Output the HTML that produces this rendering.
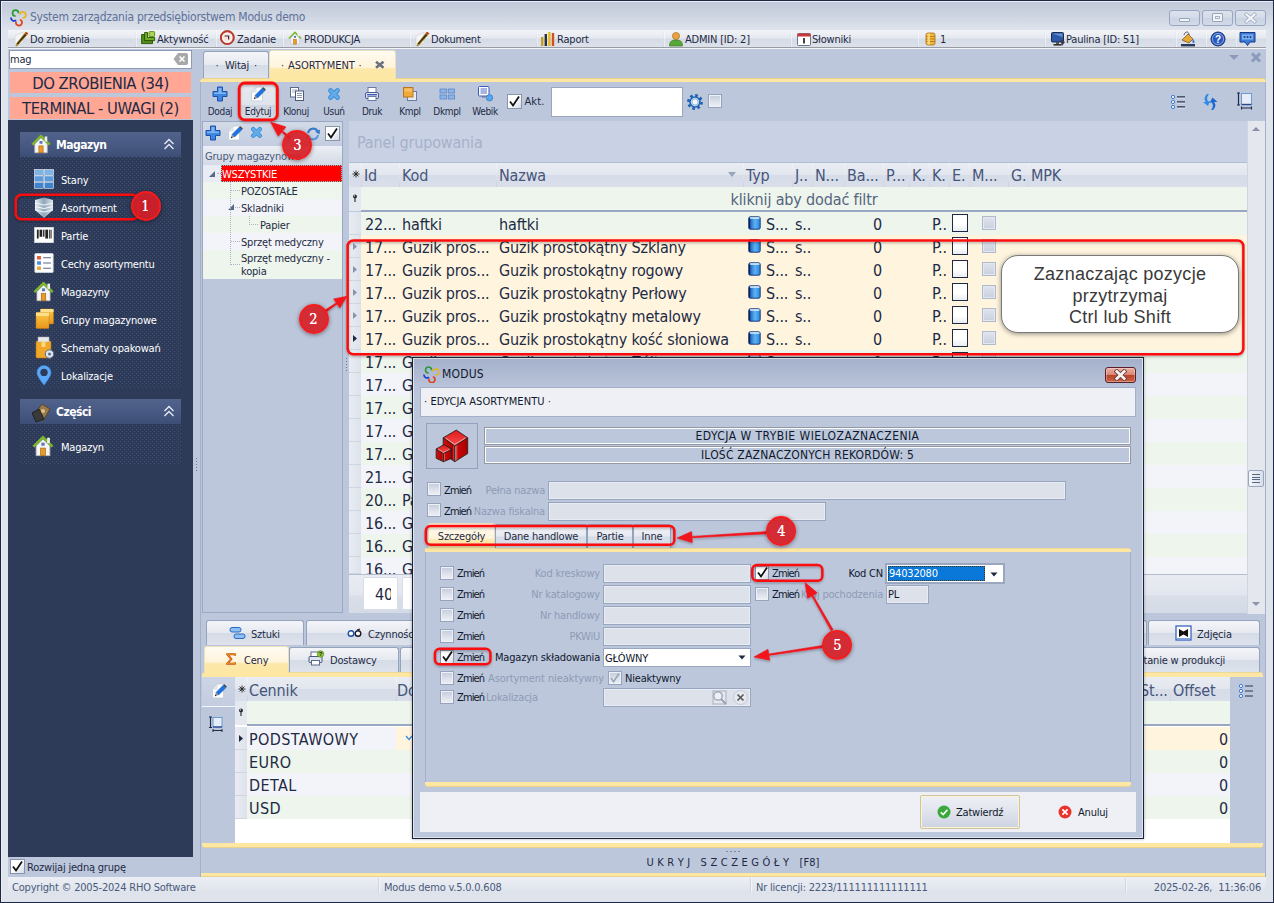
<!DOCTYPE html>
<html lang="pl">
<head>
<meta charset="utf-8">
<title>System zarządzania przedsiębiorstwem Modus demo</title>
<style>
*{box-sizing:border-box;margin:0;padding:0}
html,body{width:1274px;height:903px;overflow:hidden}
body{font-family:"DejaVu Sans Condensed","Liberation Sans",sans-serif;font-size:11px;letter-spacing:-0.2px;color:#1e2a44;background:#bcc7dc;position:relative}
.a{position:absolute}
.t{position:absolute;white-space:nowrap;line-height:14px}
.g{font-size:16px;line-height:22px;letter-spacing:-0.15px;color:#1e2a44}
.gh{font-size:16px;line-height:20px;letter-spacing:-0.15px;color:#46557a}
.w{color:#fff}
.gr{color:#8e9bb5}
.cb{background:linear-gradient(#c3cbdb,#dfe3ec 60%,#eef0f5);border:1px solid #97a3bc;box-shadow:inset 0 0 0 1px #eef1f6}
.cbw{background:linear-gradient(135deg,#fff 45%,#d3d9e4);border:1px solid #8a94ac}
.inp{background:#dde1ea;border:1px solid #98a6bf;box-shadow:inset 0 0 0 1px #e9ecf2}
.tab{border:1px solid #95a3bd;border-bottom:none;border-radius:3px 3px 0 0;background:linear-gradient(#f4f5f9,#e6e9f0 48%,#d6dce7 52%,#dde2eb)}
.tabA{border:1px solid #eadfbe;border-bottom:none;border-radius:3px 3px 0 0;background:linear-gradient(#fffbf2 0,#fff4da 58%,#fde8aa 64%,#fde7a3 100%)}
.red{border:3px solid #fc0c10;border-radius:7px;box-shadow:0 0 1.5px rgba(255,0,0,.55)}
.num{border-radius:50%;background:rgba(214,30,38,.92);border:2px solid #f41c1c;box-shadow:0 1px 4px rgba(40,0,0,.5);color:#fff;font-family:"DejaVu Serif Condensed","DejaVu Serif","Liberation Serif",serif;font-weight:normal;text-align:center;letter-spacing:0;text-shadow:0 0 .4px #fff}

.zm{letter-spacing:-0.85px}
.cbg{background:linear-gradient(#dfe3ec,#c9d0de);border:1px solid #b0bace;box-shadow:inset 0 0 0 1px #e4e7ef}

</style>
</head>
<body>
<div class="a " style="left:0px;top:0px;width:1274px;height:903px;background:#1c2844"></div>
<div class="a " style="left:1px;top:1px;width:1272px;height:901px;background:linear-gradient(#c0c9da 0,#cdd4e1 14px,#dfe3ec 29px,#dfe3ec 100%)"></div>
<div class="a " style="left:1px;top:1px;width:1272px;height:1px;background:#e9ecf2"></div>
<div class="a " style="left:1px;top:1px;width:1px;height:901px;background:#e9ecf2"></div>
<div class="a " style="left:8px;top:48px;width:1258px;height:829px;background:#bcc7dc"></div>
<div class="t " style="left:30px;top:10px;font-size:12px;color:#5d7199;letter-spacing:-0.25px;line-height:15px">System zarządzania przedsiębiorstwem Modus demo</div>
<svg class="a" style="left:9px;top:9px" width="18" height="18" viewBox="0 0 18 18"><g fill="none" stroke-width="1.7" stroke-linecap="round"><path d="M6 7 A3 3 0 1 1 9.5 3.5" stroke="#2a9a32"/><path d="M11 5 A3 3 0 1 1 14 9" stroke="#e8b418"/><path d="M11.5 11 A3 3 0 1 1 7 13" stroke="#e2401a"/><path d="M6.5 11.5 A3 3 0 0 1 2 9" stroke="#1c3fd0"/></g></svg>
<div class="a " style="left:1169px;top:10px;width:31px;height:16px;border:1px solid #98a6c4;border-radius:3px;background:linear-gradient(#dde3ec,#d3dbe7 50%,#c9d3e3 51%,#d3dbe8)"></div>
<div class="a " style="left:1202px;top:10px;width:31px;height:16px;border:1px solid #98a6c4;border-radius:3px;background:linear-gradient(#dde3ec,#d3dbe7 50%,#c9d3e3 51%,#d3dbe8)"></div>
<div class="a " style="left:1235px;top:10px;width:31px;height:16px;border:1px solid #98a6c4;border-radius:3px;background:linear-gradient(#dde3ec,#d3dbe7 50%,#c9d3e3 51%,#d3dbe8)"></div>
<div class="a " style="left:1179px;top:18px;width:11px;height:4px;border:1px solid #98a4bc;background:#f2f4f8;border-radius:1px"></div>
<div class="a " style="left:1212px;top:13px;width:11px;height:9px;border:1px solid #98a4bc;background:#f2f4f8;border-radius:1px;box-shadow:inset 0 0 0 2px #f2f4f8,inset 0 0 0 3px #a8b3c8"></div>
<svg class="a" style="left:1244px;top:12px" width="13" height="12" viewBox="0 0 13 12"><path d="M2.5 2.5 L10.5 9.5 M10.5 2.5 L2.5 9.5" stroke="#a3aec5" stroke-width="3.6" stroke-linecap="square"/><path d="M2.5 2.5 L10.5 9.5 M10.5 2.5 L2.5 9.5" stroke="#f6f7fa" stroke-width="2" stroke-linecap="square"/></svg>
<div class="a " style="left:8px;top:30px;width:1258px;height:18px;background:linear-gradient(#f2f4f7,#e6e9f0 45%,#d6dce7 55%,#dce1ea);border-bottom:1px solid #9a9ca3"></div>
<div class="a " style="left:8px;top:48px;width:1258px;height:1px;background:#f4f5f8"></div>
<div class="a " style="left:135px;top:31px;width:1px;height:16px;background:linear-gradient(#eceef3,#cdd4e1)"></div>
<div class="a " style="left:136px;top:31px;width:1px;height:16px;background:rgba(255,255,255,.45)"></div>
<div class="a " style="left:215px;top:31px;width:1px;height:16px;background:linear-gradient(#eceef3,#cdd4e1)"></div>
<div class="a " style="left:216px;top:31px;width:1px;height:16px;background:rgba(255,255,255,.45)"></div>
<div class="a " style="left:282px;top:31px;width:1px;height:16px;background:linear-gradient(#eceef3,#cdd4e1)"></div>
<div class="a " style="left:283px;top:31px;width:1px;height:16px;background:rgba(255,255,255,.45)"></div>
<div class="a " style="left:409px;top:31px;width:1px;height:16px;background:linear-gradient(#eceef3,#cdd4e1)"></div>
<div class="a " style="left:410px;top:31px;width:1px;height:16px;background:rgba(255,255,255,.45)"></div>
<div class="a " style="left:536px;top:31px;width:1px;height:16px;background:linear-gradient(#eceef3,#cdd4e1)"></div>
<div class="a " style="left:537px;top:31px;width:1px;height:16px;background:rgba(255,255,255,.45)"></div>
<div class="a " style="left:663px;top:31px;width:1px;height:16px;background:linear-gradient(#eceef3,#cdd4e1)"></div>
<div class="a " style="left:664px;top:31px;width:1px;height:16px;background:rgba(255,255,255,.45)"></div>
<div class="a " style="left:790px;top:31px;width:1px;height:16px;background:linear-gradient(#eceef3,#cdd4e1)"></div>
<div class="a " style="left:791px;top:31px;width:1px;height:16px;background:rgba(255,255,255,.45)"></div>
<div class="a " style="left:917px;top:31px;width:1px;height:16px;background:linear-gradient(#eceef3,#cdd4e1)"></div>
<div class="a " style="left:918px;top:31px;width:1px;height:16px;background:rgba(255,255,255,.45)"></div>
<div class="a " style="left:1044px;top:31px;width:1px;height:16px;background:linear-gradient(#eceef3,#cdd4e1)"></div>
<div class="a " style="left:1045px;top:31px;width:1px;height:16px;background:rgba(255,255,255,.45)"></div>
<div class="a " style="left:1175px;top:31px;width:1px;height:16px;background:linear-gradient(#eceef3,#cdd4e1)"></div>
<div class="a " style="left:1176px;top:31px;width:1px;height:16px;background:rgba(255,255,255,.45)"></div>
<div class="a " style="left:1205px;top:31px;width:1px;height:16px;background:linear-gradient(#eceef3,#cdd4e1)"></div>
<div class="a " style="left:1206px;top:31px;width:1px;height:16px;background:rgba(255,255,255,.45)"></div>
<div class="a " style="left:1235px;top:31px;width:1px;height:16px;background:linear-gradient(#eceef3,#cdd4e1)"></div>
<div class="a " style="left:1236px;top:31px;width:1px;height:16px;background:rgba(255,255,255,.45)"></div>
<div class="t " style="left:30px;top:33px;">Do zrobienia</div>
<div class="t " style="left:157px;top:33px;">Aktywność</div>
<div class="t " style="left:237px;top:33px;">Zadanie</div>
<div class="t " style="left:304px;top:33px;">PRODUKCJA</div>
<div class="t " style="left:431px;top:33px;">Dokument</div>
<div class="t " style="left:557px;top:33px;">Raport</div>
<div class="t " style="left:685px;top:33px;">ADMIN [ID: 2]</div>
<div class="t " style="left:812px;top:33px;">Słowniki</div>
<div class="t " style="left:940px;top:33px;">1</div>
<div class="t " style="left:1066px;top:33px;">Paulina [ID: 51]</div>
<svg class="a" style="left:14px;top:31px" width="16" height="16" viewBox="0 0 16 16"><path d="M1 15 L1 5 L9 1 L9 12 Z" fill="#f4f4f4" stroke="#c8c8c8" stroke-width=".5"/><path d="M12 1 L14 2.5 L4 14 L2 15 L2.6 12.6 Z" fill="#e8b820" stroke="#7a5a10" stroke-width=".6"/><path d="M12 1 L14 2.5 L13 3.6 L11 2.2Z" fill="#d02020"/><path d="M11 2.8 L12.4 3.9 L3.8 13.6 L2.8 12.6Z" fill="#3a3010"/></svg>
<svg class="a" style="left:415px;top:31px" width="16" height="16" viewBox="0 0 16 16"><path d="M1 15 L1 5 L9 1 L9 12 Z" fill="#f4f4f4" stroke="#c8c8c8" stroke-width=".5"/><path d="M12 1 L14 2.5 L4 14 L2 15 L2.6 12.6 Z" fill="#e8b820" stroke="#7a5a10" stroke-width=".6"/><path d="M12 1 L14 2.5 L13 3.6 L11 2.2Z" fill="#d02020"/><path d="M11 2.8 L12.4 3.9 L3.8 13.6 L2.8 12.6Z" fill="#3a3010"/></svg>
<svg class="a" style="left:141px;top:31px" width="15" height="14" viewBox="0 0 15 14"><path d="M0.6 3.5 H3.5 V9.5 H11.5 V12.6 H0.6Z" fill="#4f8f14" stroke="#2a4f06" stroke-width=".9"/><path d="M3.6 1.5 H6.5 V6.5 H13.6 V9.6 H3.6Z" fill="#6db024" stroke="#2a4f06" stroke-width=".9"/><rect x="8" y="0.6" width="5.6" height="5" rx=".8" fill="#a8d848" stroke="#4a7a10" stroke-width=".8"/></svg>
<svg class="a" style="left:220px;top:30px" width="15" height="15" viewBox="0 0 15 15"><circle cx="7.3" cy="7.6" r="6.3" fill="#fff" stroke="#cc3a2c" stroke-width="1.9"/><circle cx="7.3" cy="7.6" r="7.1" fill="none" stroke="#8a2a20" stroke-width=".5"/><circle cx="7.3" cy="7.6" r="4.2" fill="#f8e4e0"/><path d="M4.6 6 H8.6 V9.6" fill="none" stroke="#3a2a2a" stroke-width="1.2"/></svg>
<svg class="a" style="left:288px;top:31px" width="14" height="14" viewBox="0 0 16 16"><path d="M3 8 V15 H13 V8 L8 3Z" fill="#f6f6f6" stroke="#b8b8b8" stroke-width=".6"/><path d="M1 8.5 L8 1.5 L15 8.5" fill="none" stroke="#7cb82a" stroke-width="1.8" stroke-linejoin="round"/><rect x="6.3" y="9.5" width="3.4" height="5.5" fill="#e89a28" stroke="#a86410" stroke-width=".5"/><rect x="6.8" y="5.6" width="2.4" height="2.2" fill="#5a78b8"/><rect x="11" y="2" width="2" height="4" fill="#eee"/></svg>
<svg class="a" style="left:540px;top:31px" width="16" height="16" viewBox="0 0 16 16"><rect x="1" y="6" width="2.4" height="9" fill="#c8a020"/><rect x="4.6" y="3" width="2.4" height="12" fill="#303030"/><rect x="8.2" y="1" width="2.4" height="14" fill="#e8b820"/><rect x="11.8" y="2" width="2.4" height="13" fill="#d05020"/></svg>
<svg class="a" style="left:668px;top:31px" width="16" height="16" viewBox="0 0 16 16"><circle cx="8" cy="5" r="3.6" fill="#e8a040" stroke="#a86a18" stroke-width=".6"/><path d="M1.5 15 C1.5 10 4 9 8 9 C12 9 14.5 10 14.5 15Z" fill="#58a838" stroke="#2f6d18" stroke-width=".6"/></svg>
<svg class="a" style="left:796px;top:31px" width="16" height="16" viewBox="0 0 16 16"><rect x="1.5" y="2.5" width="13" height="12" rx="1" fill="#fff" stroke="#6a7690"/><rect x="1.5" y="2.5" width="13" height="3" fill="#c83a3a"/><rect x="7" y="7" width="2" height="5.5" fill="#444"/></svg>
<svg class="a" style="left:923px;top:31px" width="16" height="16" viewBox="0 0 16 16"><rect x="3" y="2" width="9" height="12" rx="2" fill="#f0b838" stroke="#a86a10" stroke-width=".8"/><path d="M3 5.5 H12 M3 8 H12 M3 10.5 H12" stroke="#a86a10" stroke-width=".7"/><rect x="4.5" y="2.5" width="2.5" height="11" fill="#fbe08a" opacity=".8"/></svg>
<svg class="a" style="left:1050px;top:31px" width="16" height="16" viewBox="0 0 16 16"><rect x="1.5" y="1.5" width="12" height="9.5" rx="1" fill="#2c5aa8" stroke="#1c2c50"/><path d="M2.5 2.5 H12.5 V6 Z" fill="#7aa8e8" opacity=".7"/><rect x="6" y="11" width="3" height="2" fill="#555"/><rect x="3.5" y="13" width="8" height="1.6" fill="#333"/><path d="M10 8 L15 11 L12 15Z" fill="#3a3a4a"/></svg>
<svg class="a" style="left:1180px;top:31px" width="16" height="16" viewBox="0 0 16 16"><path d="M2 9 L8 3 L13 8 L9 12 Z" fill="#e8a838" stroke="#6a4a10" stroke-width=".7"/><path d="M4 4 C5 0 9 0 9 4" fill="none" stroke="#555" stroke-width="1"/><rect x="1" y="13" width="14" height="2.4" fill="#2a3a5a"/><path d="M13 8 C15 10 15 12 13.5 12 C12 12 12 10 13 8" fill="#3a78d8"/></svg>
<svg class="a" style="left:1210px;top:31px" width="16" height="16" viewBox="0 0 16 16"><circle cx="8" cy="8" r="7" fill="#2a58c0" stroke="#14306a"/><circle cx="8" cy="8" r="5.6" fill="none" stroke="#9ab8f0" stroke-width=".8"/><text x="8" y="12" font-size="10" font-weight="bold" text-anchor="middle" fill="#fff" font-family="Liberation Sans, sans-serif">?</text></svg>
<svg class="a" style="left:1239px;top:31px" width="17" height="16" viewBox="0 0 17 16"><path d="M1 1.5 H16 V11 H11 L8.5 14.5 L6 11 H1Z" fill="#3a7ad8" stroke="#1a3a80"/><rect x="3" y="3.5" width="11" height="5" fill="#7ab0f0"/><circle cx="5.5" cy="6" r="1" fill="#1a3a80"/><circle cx="8.5" cy="6" r="1" fill="#1a3a80"/><circle cx="11.5" cy="6" r="1" fill="#1a3a80"/></svg>
<div class="a " style="left:8px;top:877px;width:1258px;height:17px;background:linear-gradient(#eceff4,#dde2eb)"></div>
<div class="a " style="left:378px;top:878px;width:1px;height:15px;background:#d0d6e2"></div>
<div class="a " style="left:379px;top:878px;width:1px;height:15px;background:#f2f4f8"></div>
<div class="a " style="left:750px;top:878px;width:1px;height:15px;background:#d0d6e2"></div>
<div class="a " style="left:751px;top:878px;width:1px;height:15px;background:#f2f4f8"></div>
<div class="a " style="left:1125px;top:878px;width:1px;height:15px;background:#d0d6e2"></div>
<div class="a " style="left:1126px;top:878px;width:1px;height:15px;background:#f2f4f8"></div>
<div class="t " style="left:12px;top:881px;color:#4a5a7c">Copyright © 2005-2024 RHO Software</div>
<div class="t " style="left:384px;top:881px;color:#4a5a7c">Modus demo v.5.0.0.608</div>
<div class="t " style="left:756px;top:881px;color:#4a5a7c">Nr licencji: 2223/111111111111111</div>
<div class="t " style="right:13px;top:881px;color:#4a5a7c">2025-02-26,&nbsp; 11:36:06</div>
<div class="a " style="left:9px;top:50px;width:183px;height:19px;background:#fff;border:1px solid #8c9ab5"></div>
<div class="t " style="left:10px;top:53px;">mag</div>
<svg class="a" style="left:173px;top:52px" width="16" height="14" viewBox="0 0 16 14"><path d="M5 1 H13 A2 2 0 0 1 15 3 V11 A2 2 0 0 1 13 13 H5 L0.5 7Z" fill="#a8a8a8"/><path d="M6.5 4.5 L11.5 9.5 M11.5 4.5 L6.5 9.5" stroke="#fff" stroke-width="1.6"/></svg>
<div class="a " style="left:10px;top:72px;width:181px;height:21px;background:#ffa695;font-size:16.5px;line-height:24px;letter-spacing:-0.48px;text-align:center;line-height:24px">DO ZROBIENIA (34)</div>
<div class="a " style="left:10px;top:97px;width:181px;height:22px;background:#ffa695;font-size:16.5px;line-height:24px;letter-spacing:-0.48px;text-align:center">TERMINAL - UWAGI (2)</div>
<div class="a " style="left:8px;top:120px;width:185px;height:737px;background:#2d3a58"></div>
<svg class="a" style="left:20px;top:157px" width="161" height="307" viewBox="0 0 161 307"><defs><pattern id="dp" width="4" height="4" patternUnits="userSpaceOnUse"><rect x="0" y="0" width="1" height="1" fill="#3f4f74"/><rect x="2" y="2" width="1" height="1" fill="#3f4f74"/></pattern></defs><rect x="0" y="0" width="161" height="232" fill="url(#dp)"/><rect x="0" y="267" width="161" height="40" fill="url(#dp)"/></svg>
<div class="a " style="left:20px;top:132px;width:161px;height:25px;background:linear-gradient(#51638b,#485a83 50%,#3d4e76)"></div>
<div class="t " style="left:56px;top:138px;color:#fff;font-weight:bold;font-size:12px;letter-spacing:-0.5px;line-height:15px">Magazyn</div>
<svg class="a" style="left:163px;top:138px" width="12" height="13" viewBox="0 0 12 13"><path d="M1.5 6 L6 1.5 L10.5 6 M1.5 11 L6 6.5 L10.5 11" fill="none" stroke="#e8ecf4" stroke-width="1.3"/></svg>
<div class="a " style="left:20px;top:399px;width:161px;height:25px;background:linear-gradient(#51638b,#485a83 50%,#3d4e76)"></div>
<div class="t " style="left:56px;top:405px;color:#fff;font-weight:bold;font-size:12px;letter-spacing:-0.5px;line-height:15px">Części</div>
<svg class="a" style="left:163px;top:405px" width="12" height="13" viewBox="0 0 12 13"><path d="M1.5 6 L6 1.5 L10.5 6 M1.5 11 L6 6.5 L10.5 11" fill="none" stroke="#e8ecf4" stroke-width="1.3"/></svg>
<div class="t " style="left:61px;top:174px;color:#fff">Stany</div>
<div class="t " style="left:61px;top:202px;color:#fff">Asortyment</div>
<div class="t " style="left:61px;top:230px;color:#fff">Partie</div>
<div class="t " style="left:61px;top:258px;color:#fff">Cechy asortymentu</div>
<div class="t " style="left:61px;top:286px;color:#fff">Magazyny</div>
<div class="t " style="left:61px;top:314px;color:#fff">Grupy magazynowe</div>
<div class="t " style="left:61px;top:342px;color:#fff">Schematy opakowań</div>
<div class="t " style="left:61px;top:370px;color:#fff">Lokalizacje</div>
<div class="t " style="left:61px;top:441px;color:#fff">Magazyn</div>
<svg class="a" style="left:31px;top:134px" width="20" height="20" viewBox="0 0 16 16"><path d="M3 8 V15 H13 V8 L8 3Z" fill="#f6f6f6" stroke="#b8b8b8" stroke-width=".6"/><path d="M1 8.5 L8 1.5 L15 8.5" fill="none" stroke="#7cb82a" stroke-width="1.8" stroke-linejoin="round"/><rect x="6.3" y="9.5" width="3.4" height="5.5" fill="#e89a28" stroke="#a86410" stroke-width=".5"/><rect x="6.8" y="5.6" width="2.4" height="2.2" fill="#5a78b8"/><rect x="11" y="2" width="2" height="4" fill="#eee"/></svg>
<svg class="a" style="left:30px;top:401px" width="22" height="22" viewBox="0 0 22 22"><path d="M4 14 L12 3 L20 8 L13 20Z" fill="#9a7a4a" stroke="#4a3a20" stroke-width=".8"/><path d="M2 12 L9 8 L14 18 L6 21Z" fill="#3a3a3a" stroke="#222"/><circle cx="13" cy="10" r="2" fill="#d8c080"/></svg>
<svg class="a" style="left:34px;top:169px" width="20" height="20" viewBox="0 0 22 22"><g stroke="#fff" stroke-width=".6"><rect x=".5" y=".5" width="10" height="6.5" fill="#7eb4e6"/><rect x="11.5" y=".5" width="10" height="6.5" fill="#7eb4e6"/><rect x=".5" y="7.6" width="10" height="6.5" fill="#5c9cdc"/><rect x="11.5" y="7.6" width="10" height="6.5" fill="#5c9cdc"/><rect x=".5" y="14.7" width="10" height="6.5" fill="#3f84cf"/><rect x="11.5" y="14.7" width="10" height="6.5" fill="#3f84cf"/></g></svg>
<svg class="a" style="left:34px;top:197px" width="20" height="22" viewBox="0 0 20 22"><defs><linearGradient id="as1" x1="0" x2="1"><stop offset="0" stop-color="#e8eef4"/><stop offset=".5" stop-color="#8fa6bc"/><stop offset="1" stop-color="#dfe6ee"/></linearGradient></defs><path d="M1 3 L10 0.5 L19 3 V13 L10 21 L1 13Z" fill="url(#as1)"/><path d="M1 6 L10 8 L19 6 M1 9.5 L10 11.5 L19 9.5 M1 13 L10 15 L19 13" stroke="#f4f7fa" stroke-width="1" fill="none"/></svg>
<svg class="a" style="left:34px;top:227px" width="20" height="16" viewBox="0 0 22 18"><rect x=".5" y=".5" width="21" height="17" fill="#fff" stroke="#ddd"/><g fill="#222"><rect x="3" y="3" width="2" height="10"/><rect x="6" y="3" width="3" height="8"/><rect x="10" y="3" width="1.5" height="8"/><rect x="12.5" y="3" width="3" height="10"/><rect x="16.5" y="3" width="1" height="10"/><rect x="18.3" y="3" width="1.2" height="10"/></g></svg>
<svg class="a" style="left:34px;top:253px" width="20" height="20" viewBox="0 0 22 23"><rect x=".5" y=".5" width="21" height="22" rx="1" fill="#fff" stroke="#cfd6e2"/><rect x="3" y="3.5" width="4.5" height="4" fill="#e05a3a"/><rect x="3" y="9.5" width="4.5" height="4" fill="#4a90d8"/><rect x="3" y="15.5" width="4.5" height="4" fill="#e8a838"/><path d="M10 5.5 H19 M10 11.5 H19 M10 17.5 H19" stroke="#5a6a8a" stroke-width="1.2"/></svg>
<svg class="a" style="left:33px;top:281px" width="21" height="21" viewBox="0 0 16 16"><path d="M3 8 V15 H13 V8 L8 3Z" fill="#f6f6f6" stroke="#b8b8b8" stroke-width=".6"/><path d="M1 8.5 L8 1.5 L15 8.5" fill="none" stroke="#7cb82a" stroke-width="1.8" stroke-linejoin="round"/><rect x="6.3" y="9.5" width="3.4" height="5.5" fill="#e89a28" stroke="#a86410" stroke-width=".5"/><rect x="6.8" y="5.6" width="2.4" height="2.2" fill="#5a78b8"/><rect x="11" y="2" width="2" height="4" fill="#eee"/></svg>
<svg class="a" style="left:35px;top:308px" width="19" height="21" viewBox="0 0 19 21"><defs><linearGradient id="gb1" x1="0" y1="0" x2="0" y2="1"><stop offset="0" stop-color="#fbc84a"/><stop offset="1" stop-color="#e8961a"/></linearGradient></defs><rect x="5.5" y="1" width="13" height="15" rx="1" fill="url(#gb1)" stroke="#c07a10" stroke-width=".5"/><rect x="5.5" y="1" width="13" height="3" fill="#fde08a"/><rect x="1" y="4.5" width="13" height="16" rx="1" fill="url(#gb1)" stroke="#c07a10" stroke-width=".5"/><rect x="1" y="4.5" width="13" height="3.4" fill="#fde08a"/></svg>
<svg class="a" style="left:34px;top:336px" width="22" height="24" viewBox="0 0 22 24"><rect x="2" y="5" width="15" height="17" rx="1" fill="#f0a828" stroke="#b87410" stroke-width=".6"/><rect x="4" y="1" width="11" height="5" fill="#e8e8ec" stroke="#aaa" stroke-width=".5"/><rect x="7.5" y="5" width="4" height="6" fill="#fbd87a"/><circle cx="15.5" cy="18" r="4.2" fill="#dfe4ec" stroke="#5a6a8a"/><circle cx="15.5" cy="18" r="1.5" fill="#5a6a8a"/></svg>
<svg class="a" style="left:36px;top:365px" width="16" height="21" viewBox="0 0 18 24"><path d="M9 23 C3 15 1 12 1 8.5 A8 8 0 0 1 17 8.5 C17 12 15 15 9 23Z" fill="#5aa8f8" stroke="#3a80d8" stroke-width=".6"/><circle cx="9" cy="8.5" r="4.2" fill="#2d3a58"/></svg>
<svg class="a" style="left:32px;top:435px" width="22" height="22" viewBox="0 0 16 16"><path d="M3 8 V15 H13 V8 L8 3Z" fill="#f6f6f6" stroke="#b8b8b8" stroke-width=".6"/><path d="M1 8.5 L8 1.5 L15 8.5" fill="none" stroke="#7cb82a" stroke-width="1.8" stroke-linejoin="round"/><rect x="6.3" y="9.5" width="3.4" height="5.5" fill="#e89a28" stroke="#a86410" stroke-width=".5"/><rect x="6.8" y="5.6" width="2.4" height="2.2" fill="#5a78b8"/><rect x="11" y="2" width="2" height="4" fill="#eee"/></svg>
<div class="a cbw" style="left:10px;top:859px;width:15px;height:15px;"></div>
<svg class="a" style="left:11px;top:860px" width="13" height="13" viewBox="0 0 13 13"><path d="M2 6.5 L5 10.5 L11 1.5" fill="none" stroke="#111" stroke-width="1.8"/></svg>
<div class="t " style="left:27px;top:861px;">Rozwijaj jedną grupę</div>
<div class="a tab" style="left:203px;top:51px;width:66px;height:27px;"></div>
<div class="t " style="left:215.5px;top:59px;">·</div>
<div class="t " style="left:225px;top:59px;">Witaj</div>
<div class="t " style="left:254px;top:59px;">·</div>
<div class="a " style="left:200px;top:78px;width:1066px;height:4px;background:#fde7a3;border-top:1px solid #e8d28e;border-radius:4px 4px 0 0"></div>
<div class="a tabA" style="left:269px;top:50px;width:127px;height:29px;"></div>
<div class="t " style="left:281px;top:59px;">·</div>
<div class="t " style="left:288px;top:59px;letter-spacing:-0.05px">ASORTYMENT</div>
<div class="t " style="left:358.5px;top:59px;">·</div>
<svg class="a" style="left:374px;top:60px" width="11" height="10" viewBox="0 0 11 10"><path d="M2 1.8 L9.5 7.8 M9.5 1.8 L2 7.8" stroke="#6c7080" stroke-width="2.7"/></svg>
<div class="a " style="left:200px;top:82px;width:1px;height:795px;background:#a3b0ca"></div>
<div class="a " style="left:1265px;top:82px;width:1px;height:795px;background:#a3b0ca"></div>
<svg class="a" style="left:1228px;top:54px" width="12" height="8" viewBox="0 0 12 8"><path d="M1 1 H11 L6 6Z" fill="#8c9abb"/></svg>
<svg class="a" style="left:1250px;top:52px" width="12" height="12" viewBox="0 0 12 12"><path d="M2 1.5 L10 9.5 M10 1.5 L2 9.5" stroke="#8c9abb" stroke-width="3"/></svg>
<div class="a " style="left:240px;top:84px;width:36px;height:35px;background:linear-gradient(#e6e9f0,#dfe3eb 60%,#cfd5e1 62%,#d3d9e4);border:1px solid #d8d2b8;border-radius:4px"></div>
<div class="t " style="left:195px;top:105px;width:50px;text-align:center;font-size:10px;letter-spacing:-0.35px;color:#1e2a44">Dodaj</div>
<div class="t " style="left:233px;top:105px;width:50px;text-align:center;font-size:10px;letter-spacing:-0.35px;color:#1e2a44">Edytuj</div>
<div class="t " style="left:271px;top:105px;width:50px;text-align:center;font-size:10px;letter-spacing:-0.35px;color:#1e2a44">Klonuj</div>
<div class="t " style="left:309px;top:105px;width:50px;text-align:center;font-size:10px;letter-spacing:-0.35px;color:#1e2a44">Usuń</div>
<div class="t " style="left:347px;top:105px;width:50px;text-align:center;font-size:10px;letter-spacing:-0.35px;color:#1e2a44">Druk</div>
<div class="t " style="left:385px;top:105px;width:50px;text-align:center;font-size:10px;letter-spacing:-0.35px;color:#1e2a44">Kmpl</div>
<div class="t " style="left:422px;top:105px;width:50px;text-align:center;font-size:10px;letter-spacing:-0.35px;color:#1e2a44">Dkmpl</div>
<div class="t " style="left:460px;top:105px;width:50px;text-align:center;font-size:10px;letter-spacing:-0.35px;color:#1e2a44">Webik</div>
<svg class="a" style="left:212px;top:86px" width="16" height="16" viewBox="0 0 16 16"><path d="M5.5 1 H10.5 V5.5 H15 V10.5 H10.5 V15 H5.5 V10.5 H1 V5.5 H5.5Z" fill="#3f86e0" stroke="#1c4fa8" stroke-width="1"/><path d="M6.5 2 H9.5 V6.5 H14 V8 H2 V6.5 H6.5Z" fill="#8cc0f8" opacity=".8"/></svg>
<svg class="a" style="left:250px;top:86px" width="16" height="16" viewBox="0 0 16 16"><path d="M2.5 15 Q1.5 15 1.5 14 V6 L6.5 1 H11.5 Q12.5 1 12.5 2 V14 Q12.5 15 11.5 15Z" fill="#fff" stroke="#c3c9d6" stroke-width=".8"/><path d="M1.8 6 H6.2 V1.4Z" fill="#e9ecf1" stroke="#c3c9d6" stroke-width=".5"/><path d="M12.4 2 L15 4.6 L7.6 12 L5 9.4Z" fill="#1c74e0" stroke="#1450a8" stroke-width=".5"/><path d="M12.4 2 L13.4 1.2 L15.8 3.6 L15 4.6Z" fill="#3a3a40"/><path d="M5 9.4 L7.6 12 L3.8 13.2Z" fill="#8a8e98"/><path d="M3.8 13.2 L4.3 11.6 L5.4 12.7Z" fill="#222"/></svg>
<svg class="a" style="left:289px;top:86px" width="16" height="16" viewBox="0 0 16 16"><rect x="1.5" y="1.5" width="8" height="9.5" fill="#fff" stroke="#5a6a8a"/><path d="M3 4 H8 M3 6 H8" stroke="#8a98b5" stroke-width=".8"/><rect x="6.5" y="5" width="8" height="9.5" fill="#fff" stroke="#4a5a7a"/><path d="M8 7.5 H13 M8 9.5 H13 M8 11.5 H13" stroke="#6a7a9a" stroke-width=".8"/></svg>
<svg class="a" style="left:326px;top:86px" width="16" height="16" viewBox="0 0 16 16"><path d="M4.5 4.5 L11.5 11.5 M11.5 4.5 L4.5 11.5" stroke="#3f8fd8" stroke-width="4.8" stroke-linecap="round"/><path d="M4.5 4.5 L11.5 11.5 M11.5 4.5 L4.5 11.5" stroke="#62acea" stroke-width="2.8" stroke-linecap="round"/></svg>
<svg class="a" style="left:364px;top:86px" width="16" height="16" viewBox="0 0 16 16"><rect x="4" y="1.5" width="8" height="6" fill="#fff" stroke="#6a7aa8"/><rect x="1.5" y="6.5" width="13" height="6" rx="1.5" fill="#e4e8f2" stroke="#4a5a90"/><rect x="4" y="10.5" width="8" height="4" fill="#fff" stroke="#6a7aa8"/><rect x="3" y="8" width="10" height="1.4" fill="#3a5ac0"/></svg>
<svg class="a" style="left:402px;top:86px" width="16" height="16" viewBox="0 0 16 16"><rect x="5.5" y="5.5" width="9" height="9" fill="#e9ecf4" stroke="#6a7aa8"/><rect x="1.5" y="1.5" width="9.5" height="9.5" fill="#f0a838" stroke="#b87820"/><rect x="2.5" y="2.5" width="7.5" height="3" fill="#f8c870" opacity=".8"/></svg>
<svg class="a" style="left:439px;top:88px" width="17" height="12" viewBox="0 0 17 12"><g fill="#8cb4e8" stroke="#5a88c8" stroke-width=".8"><rect x="1" y="1" width="6.4" height="4"/><rect x="9.2" y="1" width="6.4" height="4"/><rect x="1" y="7" width="6.4" height="4"/><rect x="9.2" y="7" width="6.4" height="4"/></g></svg>
<svg class="a" style="left:477px;top:85px" width="17" height="17" viewBox="0 0 17 17"><rect x="1.5" y="1.5" width="10.5" height="9.5" rx="1" fill="#fff" stroke="#3a5ab8"/><path d="M3.5 4 H10 M3.5 6 H10 M3.5 8 H10" stroke="#3a5ab8" stroke-width=".9"/><circle cx="12.5" cy="12.8" r="3.2" fill="#5aa8ec" stroke="#2a68b8" stroke-width=".6"/><path d="M5 12 H8.5" stroke="#5a6a8a"/></svg>
<div class="a cbw" style="left:507px;top:94px;width:15px;height:15px;"></div>
<svg class="a" style="left:508px;top:95px" width="13" height="13" viewBox="0 0 13 13"><path d="M2 6.5 L5 10.5 L11 1.5" fill="none" stroke="#111" stroke-width="1.8"/></svg>
<div class="t " style="left:524.5px;top:95px;letter-spacing:0.1px">Akt.</div>
<div class="a " style="left:551px;top:87px;width:132px;height:30px;background:#fff;border:1px solid #98a6bf"></div>
<svg class="a" style="left:686px;top:93px" width="18" height="18" viewBox="0 0 18 18"><circle cx="9" cy="9" r="6.6" fill="none" stroke="#1c62b0" stroke-width="2.6" stroke-dasharray="2.6 2.58"/><circle cx="9" cy="9" r="5" fill="#e4eef8" stroke="#1c62b0" stroke-width="1.6"/><circle cx="9" cy="9" r="3.2" fill="#f4f8fc" stroke="#6a9ad0" stroke-width=".8"/></svg>
<div class="a cb" style="left:708px;top:94px;width:14px;height:14px;"></div>
<svg class="a" style="left:1170px;top:94px" width="17" height="16" viewBox="0 0 17 16"><g fill="#fff" stroke="#3a78d0" stroke-width="1"><circle cx="3" cy="3" r="1.6"/><circle cx="3" cy="8" r="1.6"/><circle cx="3" cy="13" r="1.6"/></g><path d="M7 3 H15 M7 8 H15 M7 13 H15" stroke="#2a3550" stroke-width="1.4"/><path d="M7 4 H15 M7 9 H15 M7 14 H15" stroke="#fff" stroke-width=".6"/></svg>
<svg class="a" style="left:1201px;top:93px" width="18" height="18" viewBox="0 0 18 18"><path d="M6 1 C3 4 3 7 5 9 L2 9 L7 13 L9 8 L7 8.6 C5.5 6 6 3 8 1Z" fill="#2a8ae8"/><path d="M12 17 C15 14 15 11 13 9 L16.5 9 L11.5 4.5 L8.5 10 L11 9.4 C12.5 12 12 15 10 17Z" fill="#1c6ad0"/></svg>
<svg class="a" style="left:1236px;top:92px" width="18" height="18" viewBox="0 0 18 18"><rect x="5.5" y="1.5" width="10" height="11" fill="#e8ecf6" stroke="#6a9ad8"/><path d="M5.5 12.5 H15.5" stroke="#2a4a90" stroke-width="1.4"/><path d="M2.5 1 V13 M1 1 H4 M1 13 H4" stroke="#1e2a44" stroke-width="1.2"/><path d="M5.5 16 H15.5 M5.5 14.5 V17.5 M15.5 14.5 V17.5" stroke="#1e2a44" stroke-width="1.1"/></svg>
<div class="a " style="left:202px;top:121px;width:141px;height:492px;border:1px solid #9aa8c3;background:#bcc7dc"></div>
<div class="a " style="left:203px;top:122px;width:139px;height:24px;background:linear-gradient(#d3dae7,#c3cde0)"></div>
<svg class="a" style="left:205px;top:125px" width="16" height="16" viewBox="0 0 16 16"><path d="M5.5 1 H10.5 V5.5 H15 V10.5 H10.5 V15 H5.5 V10.5 H1 V5.5 H5.5Z" fill="#3f86e0" stroke="#1c4fa8" stroke-width="1"/><path d="M6.5 2 H9.5 V6.5 H14 V8 H2 V6.5 H6.5Z" fill="#8cc0f8" opacity=".8"/></svg>
<svg class="a" style="left:227px;top:125px" width="16" height="16" viewBox="0 0 16 16"><path d="M2.5 15 Q1.5 15 1.5 14 V6 L6.5 1 H11.5 Q12.5 1 12.5 2 V14 Q12.5 15 11.5 15Z" fill="#fff" stroke="#c3c9d6" stroke-width=".8"/><path d="M1.8 6 H6.2 V1.4Z" fill="#e9ecf1" stroke="#c3c9d6" stroke-width=".5"/><path d="M12.4 2 L15 4.6 L7.6 12 L5 9.4Z" fill="#1c74e0" stroke="#1450a8" stroke-width=".5"/><path d="M12.4 2 L13.4 1.2 L15.8 3.6 L15 4.6Z" fill="#3a3a40"/><path d="M5 9.4 L7.6 12 L3.8 13.2Z" fill="#8a8e98"/><path d="M3.8 13.2 L4.3 11.6 L5.4 12.7Z" fill="#222"/></svg>
<svg class="a" style="left:249px;top:125px" width="15" height="15" viewBox="0 0 16 16"><path d="M4.5 4.5 L11.5 11.5 M11.5 4.5 L4.5 11.5" stroke="#3f8fd8" stroke-width="4.8" stroke-linecap="round"/><path d="M4.5 4.5 L11.5 11.5 M11.5 4.5 L4.5 11.5" stroke="#62acea" stroke-width="2.8" stroke-linecap="round"/></svg>
<svg class="a" style="left:305px;top:126px" width="16" height="16" viewBox="0 0 16 16"><path d="M3 7 A5.2 5.2 0 0 1 12.6 5.2" fill="none" stroke="#3a78c8" stroke-width="2"/><path d="M10.2 5.8 L15 3.6 L14.6 8.6Z" fill="#3a78c8"/><path d="M13 9 A5.2 5.2 0 0 1 3.4 10.8" fill="none" stroke="#5a9ae0" stroke-width="2"/><path d="M5.8 10.2 L1 12.4 L1.4 7.4Z" fill="#5a9ae0"/></svg>
<div class="a cbw" style="left:325px;top:126px;width:15px;height:15px;"></div>
<svg class="a" style="left:326px;top:127px" width="13" height="13" viewBox="0 0 13 13"><path d="M2 6.5 L5 10.5 L11 1.5" fill="none" stroke="#111" stroke-width="1.8"/></svg>
<div class="a " style="left:203px;top:146px;width:139px;height:19px;background:linear-gradient(#eceff4,#dfe4ec 50%,#d3dae6)"></div>
<div class="t " style="left:205px;top:150px;color:#4a5a7c">Grupy magazynowe</div>
<div class="a " style="left:203px;top:165px;width:18px;height:17px;background:#e9ecf2"></div>
<div class="a " style="left:221px;top:165px;width:121px;height:17px;background:#ff0000;outline:1px dotted #6ad8d8;outline-offset:-1px"></div>
<div class="t " style="left:222px;top:168px;color:#fff">WSZYSTKIE</div>
<svg class="a" style="left:208px;top:170px" width="8" height="8" viewBox="0 0 8 8"><path d="M7 1 V7 H1Z" fill="#5a6886"/></svg>
<div class="a " style="left:203px;top:182px;width:139px;height:17px;background:#edf5ec"></div>
<div class="a " style="left:203px;top:199px;width:139px;height:17px;background:#f3f4f9"></div>
<div class="a " style="left:203px;top:216px;width:139px;height:17px;background:#edf5ec"></div>
<div class="a " style="left:203px;top:233px;width:139px;height:17px;background:#f3f4f9"></div>
<div class="a " style="left:203px;top:250px;width:139px;height:29px;background:#edf5ec"></div>
<div class="t " style="left:241px;top:185px;">POZOSTAŁE</div>
<div class="t " style="left:241px;top:202px;">Skladniki</div>
<div class="t " style="left:260px;top:219px;">Papier</div>
<div class="t " style="left:241px;top:236px;">Sprzęt medyczny</div>
<div class="t " style="left:241px;top:252px;">Sprzęt medyczny -</div>
<div class="t " style="left:241px;top:265px;">kopia</div>
<svg class="a" style="left:227px;top:203px" width="8" height="8" viewBox="0 0 8 8"><path d="M7 1 V7 H1Z" fill="#5a6886"/></svg>
<div class="a " style="left:217px;top:173px;width:4px;height:1px;border-top:1px dotted #aab2c4"></div>
<div class="a " style="left:230px;top:182px;width:1px;height:83px;border-left:1px dotted #aab2c4"></div>
<div class="a " style="left:231px;top:190px;width:9px;height:1px;border-top:1px dotted #aab2c4"></div>
<div class="a " style="left:235px;top:207px;width:5px;height:1px;border-top:1px dotted #aab2c4"></div>
<div class="a " style="left:231px;top:241px;width:9px;height:1px;border-top:1px dotted #aab2c4"></div>
<div class="a " style="left:231px;top:264px;width:9px;height:1px;border-top:1px dotted #aab2c4"></div>
<div class="a " style="left:249px;top:216px;width:1px;height:9px;border-left:1px dotted #aab2c4"></div>
<div class="a " style="left:249px;top:224px;width:9px;height:1px;border-top:1px dotted #aab2c4"></div>
<div class="a " style="left:346px;top:358px;width:1px;height:1px;background:#6a7a9a"></div>
<div class="a " style="left:346px;top:361px;width:1px;height:1px;background:#6a7a9a"></div>
<div class="a " style="left:346px;top:364px;width:1px;height:1px;background:#6a7a9a"></div>
<div class="a " style="left:346px;top:367px;width:1px;height:1px;background:#6a7a9a"></div>
<div class="a " style="left:346px;top:370px;width:1px;height:1px;background:#6a7a9a"></div>
<div class="a " style="left:196px;top:458px;width:1px;height:1px;background:#6a7a9a"></div>
<div class="a " style="left:196px;top:461px;width:1px;height:1px;background:#6a7a9a"></div>
<div class="a " style="left:196px;top:464px;width:1px;height:1px;background:#6a7a9a"></div>
<div class="a " style="left:196px;top:467px;width:1px;height:1px;background:#6a7a9a"></div>
<div class="a " style="left:196px;top:470px;width:1px;height:1px;background:#6a7a9a"></div>
<div class="a " style="left:349px;top:121px;width:898px;height:41px;background:#c9d2e4"></div>
<div class="t g" style="left:357px;top:132px;color:#a5b1ca">Panel grupowania</div>
<div class="a " style="left:349px;top:162px;width:898px;height:25px;background:linear-gradient(#e9ecf2,#e2e6ee 48%,#d6dce8 52%,#d9dfea);border-top:1px solid #b3bdd0"></div>
<div class="a " style="left:361px;top:163px;width:1px;height:24px;background:linear-gradient(#f4f6f9,#c9d1e0)"></div>
<div class="a " style="left:399px;top:163px;width:1px;height:24px;background:linear-gradient(#f4f6f9,#c9d1e0)"></div>
<div class="a " style="left:496px;top:163px;width:1px;height:24px;background:linear-gradient(#f4f6f9,#c9d1e0)"></div>
<div class="a " style="left:743px;top:163px;width:1px;height:24px;background:linear-gradient(#f4f6f9,#c9d1e0)"></div>
<div class="a " style="left:792px;top:163px;width:1px;height:24px;background:linear-gradient(#f4f6f9,#c9d1e0)"></div>
<div class="a " style="left:812px;top:163px;width:1px;height:24px;background:linear-gradient(#f4f6f9,#c9d1e0)"></div>
<div class="a " style="left:844px;top:163px;width:1px;height:24px;background:linear-gradient(#f4f6f9,#c9d1e0)"></div>
<div class="a " style="left:883px;top:163px;width:1px;height:24px;background:linear-gradient(#f4f6f9,#c9d1e0)"></div>
<div class="a " style="left:909px;top:163px;width:1px;height:24px;background:linear-gradient(#f4f6f9,#c9d1e0)"></div>
<div class="a " style="left:929px;top:163px;width:1px;height:24px;background:linear-gradient(#f4f6f9,#c9d1e0)"></div>
<div class="a " style="left:949px;top:163px;width:1px;height:24px;background:linear-gradient(#f4f6f9,#c9d1e0)"></div>
<div class="a " style="left:969px;top:163px;width:1px;height:24px;background:linear-gradient(#f4f6f9,#c9d1e0)"></div>
<div class="a " style="left:1008px;top:163px;width:1px;height:24px;background:linear-gradient(#f4f6f9,#c9d1e0)"></div>
<div class="a " style="left:1028px;top:163px;width:1px;height:24px;background:linear-gradient(#f4f6f9,#c9d1e0)"></div>
<svg class="a" style="left:351px;top:169px" width="10" height="10" viewBox="0 0 10 10"><path d="M5 1.5 V8.5 M1.5 5 H8.5 M2.6 2.6 L7.4 7.4 M7.4 2.6 L2.6 7.4" stroke="#222" stroke-width=".9"/></svg>
<div class="t gh" style="left:364px;top:166px;">Id</div>
<div class="t gh" style="left:402px;top:166px;">Kod</div>
<div class="t gh" style="left:499px;top:166px;">Nazwa</div>
<div class="t gh" style="left:746px;top:166px;">Typ</div>
<div class="t gh" style="left:795px;top:166px;">J..</div>
<div class="t gh" style="left:815px;top:166px;">N...</div>
<div class="t gh" style="left:847px;top:166px;">Ba...</div>
<div class="t gh" style="left:886px;top:166px;">P...</div>
<div class="t gh" style="left:912px;top:166px;">K.</div>
<div class="t gh" style="left:932px;top:166px;">K.</div>
<div class="t gh" style="left:952px;top:166px;">E.</div>
<div class="t gh" style="left:972px;top:166px;">M...</div>
<div class="t gh" style="left:1011px;top:166px;">G.</div>
<div class="t gh" style="left:1031px;top:166px;">MPK</div>
<svg class="a" style="left:727px;top:171px" width="10" height="7" viewBox="0 0 10 7"><path d="M1 1 H9 L5 6Z" fill="#9aa5bb"/></svg>
<div class="a " style="left:349px;top:187px;width:12px;height:24px;background:#e4e8f0"></div>
<div class="a " style="left:361px;top:187px;width:886px;height:23px;background:#edf5ec"></div>
<div class="a " style="left:361px;top:210px;width:886px;height:2px;background:#9aa7c2"></div>
<svg class="a" style="left:351px;top:193px" width="8" height="10" viewBox="0 0 8 10"><circle cx="4" cy="3.4" r="1.9" fill="#222"/><path d="M4 4.5 V9" stroke="#222" stroke-width="1.1"/><circle cx="3.6" cy="2.9" r=".6" fill="#fff"/></svg>
<div class="t g" style="left:361px;top:189px;width:886px;text-align:center;color:#56647f">kliknij aby dodać filtr</div>
<div class="a " style="left:349px;top:212px;width:12px;height:23px;background:linear-gradient(90deg,#e9ecf2,#dde2eb);border-bottom:1px solid #cfd6e2"></div>
<div class="a " style="left:361px;top:212px;width:886px;height:23px;background:#edf5ec;overflow:hidden"></div>
<div class="t g" style="left:365px;top:214px;">22...</div>
<div class="t g" style="left:402px;top:214px;">haftki</div>
<div class="t g" style="left:499px;top:214px;">haftki</div>
<svg class="a" style="left:748px;top:216px" width="13" height="14" viewBox="0 0 13 14"><defs><linearGradient id="bk0" x1="0" x2="1"><stop offset="0" stop-color="#1450b0"/><stop offset=".55" stop-color="#5cb4f4"/><stop offset="1" stop-color="#2a84dc"/></linearGradient></defs><rect x=".8" y=".8" width="11.4" height="12.4" rx="1.5" fill="url(#bk0)" stroke="#102e70" stroke-width=".9"/><path d="M2 2 H11.4" stroke="#e4f2ff" stroke-width="1.5"/><path d="M1.5 2.6 V12.6" stroke="#0a2258" stroke-width="1.4"/></svg>
<div class="t g" style="left:766px;top:214px;">S...</div>
<div class="t g" style="left:795px;top:214px;">s..</div>
<div class="t g" style="right:392px;top:214px;">0</div>
<div class="a" style="left:932px;top:212px;width:14px;height:23px;overflow:hidden"><div class="t g" style="left:0;top:2px">P..</div></div>
<div class="a " style="left:952px;top:214px;width:16px;height:18px;background:linear-gradient(#fff 55%,#e9ecf2);border:1px solid #1e2a44"></div>
<div class="a cbg" style="left:982px;top:216px;width:14px;height:14px;"></div>
<div class="a " style="left:349px;top:235px;width:12px;height:23px;background:linear-gradient(90deg,#e9ecf2,#dde2eb);border-bottom:1px solid #cfd6e2"></div>
<div class="a " style="left:361px;top:235px;width:886px;height:23px;background:#fff5df;overflow:hidden"></div>
<div class="t g" style="left:365px;top:237px;">17...</div>
<div class="t g" style="left:402px;top:237px;">Guzik pros...</div>
<div class="t g" style="left:499px;top:237px;">Guzik prostokątny Szklany</div>
<svg class="a" style="left:748px;top:239px" width="13" height="14" viewBox="0 0 13 14"><defs><linearGradient id="bk1" x1="0" x2="1"><stop offset="0" stop-color="#1450b0"/><stop offset=".55" stop-color="#5cb4f4"/><stop offset="1" stop-color="#2a84dc"/></linearGradient></defs><rect x=".8" y=".8" width="11.4" height="12.4" rx="1.5" fill="url(#bk1)" stroke="#102e70" stroke-width=".9"/><path d="M2 2 H11.4" stroke="#e4f2ff" stroke-width="1.5"/><path d="M1.5 2.6 V12.6" stroke="#0a2258" stroke-width="1.4"/></svg>
<div class="t g" style="left:766px;top:237px;">S...</div>
<div class="t g" style="left:795px;top:237px;">s..</div>
<div class="t g" style="right:392px;top:237px;">0</div>
<div class="a" style="left:932px;top:235px;width:14px;height:23px;overflow:hidden"><div class="t g" style="left:0;top:2px">P..</div></div>
<div class="a " style="left:952px;top:237px;width:16px;height:18px;background:linear-gradient(#fff 55%,#e9ecf2);border:1px solid #1e2a44"></div>
<div class="a cbg" style="left:982px;top:239px;width:14px;height:14px;"></div>
<svg class="a" style="left:352px;top:242px" width="6" height="9" viewBox="0 0 6 9"><path d="M1 1 L5 4.5 L1 8Z" fill="#8a93a8"/></svg>
<div class="a " style="left:349px;top:258px;width:12px;height:23px;background:linear-gradient(90deg,#e9ecf2,#dde2eb);border-bottom:1px solid #cfd6e2"></div>
<div class="a " style="left:361px;top:258px;width:886px;height:23px;background:#fff5df;overflow:hidden"></div>
<div class="t g" style="left:365px;top:260px;">17...</div>
<div class="t g" style="left:402px;top:260px;">Guzik pros...</div>
<div class="t g" style="left:499px;top:260px;">Guzik prostokątny rogowy</div>
<svg class="a" style="left:748px;top:262px" width="13" height="14" viewBox="0 0 13 14"><defs><linearGradient id="bk2" x1="0" x2="1"><stop offset="0" stop-color="#1450b0"/><stop offset=".55" stop-color="#5cb4f4"/><stop offset="1" stop-color="#2a84dc"/></linearGradient></defs><rect x=".8" y=".8" width="11.4" height="12.4" rx="1.5" fill="url(#bk2)" stroke="#102e70" stroke-width=".9"/><path d="M2 2 H11.4" stroke="#e4f2ff" stroke-width="1.5"/><path d="M1.5 2.6 V12.6" stroke="#0a2258" stroke-width="1.4"/></svg>
<div class="t g" style="left:766px;top:260px;">S...</div>
<div class="t g" style="left:795px;top:260px;">s..</div>
<div class="t g" style="right:392px;top:260px;">0</div>
<div class="a" style="left:932px;top:258px;width:14px;height:23px;overflow:hidden"><div class="t g" style="left:0;top:2px">P..</div></div>
<div class="a " style="left:952px;top:260px;width:16px;height:18px;background:linear-gradient(#fff 55%,#e9ecf2);border:1px solid #1e2a44"></div>
<div class="a cbg" style="left:982px;top:262px;width:14px;height:14px;"></div>
<svg class="a" style="left:352px;top:265px" width="6" height="9" viewBox="0 0 6 9"><path d="M1 1 L5 4.5 L1 8Z" fill="#8a93a8"/></svg>
<div class="a " style="left:349px;top:281px;width:12px;height:23px;background:linear-gradient(90deg,#e9ecf2,#dde2eb);border-bottom:1px solid #cfd6e2"></div>
<div class="a " style="left:361px;top:281px;width:886px;height:23px;background:#fff5df;overflow:hidden"></div>
<div class="t g" style="left:365px;top:283px;">17...</div>
<div class="t g" style="left:402px;top:283px;">Guzik pros...</div>
<div class="t g" style="left:499px;top:283px;">Guzik prostokątny Perłowy</div>
<svg class="a" style="left:748px;top:285px" width="13" height="14" viewBox="0 0 13 14"><defs><linearGradient id="bk3" x1="0" x2="1"><stop offset="0" stop-color="#1450b0"/><stop offset=".55" stop-color="#5cb4f4"/><stop offset="1" stop-color="#2a84dc"/></linearGradient></defs><rect x=".8" y=".8" width="11.4" height="12.4" rx="1.5" fill="url(#bk3)" stroke="#102e70" stroke-width=".9"/><path d="M2 2 H11.4" stroke="#e4f2ff" stroke-width="1.5"/><path d="M1.5 2.6 V12.6" stroke="#0a2258" stroke-width="1.4"/></svg>
<div class="t g" style="left:766px;top:283px;">S...</div>
<div class="t g" style="left:795px;top:283px;">s..</div>
<div class="t g" style="right:392px;top:283px;">0</div>
<div class="a" style="left:932px;top:281px;width:14px;height:23px;overflow:hidden"><div class="t g" style="left:0;top:2px">P..</div></div>
<div class="a " style="left:952px;top:283px;width:16px;height:18px;background:linear-gradient(#fff 55%,#e9ecf2);border:1px solid #1e2a44"></div>
<div class="a cbg" style="left:982px;top:285px;width:14px;height:14px;"></div>
<svg class="a" style="left:352px;top:288px" width="6" height="9" viewBox="0 0 6 9"><path d="M1 1 L5 4.5 L1 8Z" fill="#8a93a8"/></svg>
<div class="a " style="left:349px;top:304px;width:12px;height:23px;background:linear-gradient(90deg,#e9ecf2,#dde2eb);border-bottom:1px solid #cfd6e2"></div>
<div class="a " style="left:361px;top:304px;width:886px;height:23px;background:#fff5df;overflow:hidden"></div>
<div class="t g" style="left:365px;top:306px;">17...</div>
<div class="t g" style="left:402px;top:306px;">Guzik pros...</div>
<div class="t g" style="left:499px;top:306px;">Guzik prostokątny metalowy</div>
<svg class="a" style="left:748px;top:308px" width="13" height="14" viewBox="0 0 13 14"><defs><linearGradient id="bk4" x1="0" x2="1"><stop offset="0" stop-color="#1450b0"/><stop offset=".55" stop-color="#5cb4f4"/><stop offset="1" stop-color="#2a84dc"/></linearGradient></defs><rect x=".8" y=".8" width="11.4" height="12.4" rx="1.5" fill="url(#bk4)" stroke="#102e70" stroke-width=".9"/><path d="M2 2 H11.4" stroke="#e4f2ff" stroke-width="1.5"/><path d="M1.5 2.6 V12.6" stroke="#0a2258" stroke-width="1.4"/></svg>
<div class="t g" style="left:766px;top:306px;">S...</div>
<div class="t g" style="left:795px;top:306px;">s..</div>
<div class="t g" style="right:392px;top:306px;">0</div>
<div class="a" style="left:932px;top:304px;width:14px;height:23px;overflow:hidden"><div class="t g" style="left:0;top:2px">P..</div></div>
<div class="a " style="left:952px;top:306px;width:16px;height:18px;background:linear-gradient(#fff 55%,#e9ecf2);border:1px solid #1e2a44"></div>
<div class="a cbg" style="left:982px;top:308px;width:14px;height:14px;"></div>
<svg class="a" style="left:352px;top:311px" width="6" height="9" viewBox="0 0 6 9"><path d="M1 1 L5 4.5 L1 8Z" fill="#8a93a8"/></svg>
<div class="a " style="left:349px;top:327px;width:12px;height:23px;background:linear-gradient(90deg,#e9ecf2,#dde2eb);border-bottom:1px solid #cfd6e2"></div>
<div class="a " style="left:361px;top:327px;width:886px;height:23px;background:#fff5df;overflow:hidden"></div>
<div class="t g" style="left:365px;top:329px;">17...</div>
<div class="t g" style="left:402px;top:329px;">Guzik pros...</div>
<div class="t g" style="left:499px;top:329px;">Guzik prostokątny kość słoniowa</div>
<svg class="a" style="left:748px;top:331px" width="13" height="14" viewBox="0 0 13 14"><defs><linearGradient id="bk5" x1="0" x2="1"><stop offset="0" stop-color="#1450b0"/><stop offset=".55" stop-color="#5cb4f4"/><stop offset="1" stop-color="#2a84dc"/></linearGradient></defs><rect x=".8" y=".8" width="11.4" height="12.4" rx="1.5" fill="url(#bk5)" stroke="#102e70" stroke-width=".9"/><path d="M2 2 H11.4" stroke="#e4f2ff" stroke-width="1.5"/><path d="M1.5 2.6 V12.6" stroke="#0a2258" stroke-width="1.4"/></svg>
<div class="t g" style="left:766px;top:329px;">S...</div>
<div class="t g" style="left:795px;top:329px;">s..</div>
<div class="t g" style="right:392px;top:329px;">0</div>
<div class="a" style="left:932px;top:327px;width:14px;height:23px;overflow:hidden"><div class="t g" style="left:0;top:2px">P..</div></div>
<div class="a " style="left:952px;top:329px;width:16px;height:18px;background:linear-gradient(#fff 55%,#e9ecf2);border:1px solid #1e2a44"></div>
<div class="a cbg" style="left:982px;top:331px;width:14px;height:14px;"></div>
<svg class="a" style="left:352px;top:334px" width="6" height="9" viewBox="0 0 6 9"><path d="M1 1 L5 4.5 L1 8Z" fill="#1e2a44"/></svg>
<div class="a " style="left:349px;top:350px;width:12px;height:23px;background:linear-gradient(90deg,#e9ecf2,#dde2eb);border-bottom:1px solid #cfd6e2"></div>
<div class="a " style="left:361px;top:350px;width:886px;height:23px;background:#edf5ec;overflow:hidden"></div>
<div class="t g" style="left:365px;top:352px;">17...</div>
<div class="t g" style="left:402px;top:352px;">Guzik pros...</div>
<div class="t g" style="left:499px;top:352px;">Guzik prostokątny Zółty</div>
<svg class="a" style="left:748px;top:354px" width="13" height="14" viewBox="0 0 13 14"><defs><linearGradient id="bk6" x1="0" x2="1"><stop offset="0" stop-color="#1450b0"/><stop offset=".55" stop-color="#5cb4f4"/><stop offset="1" stop-color="#2a84dc"/></linearGradient></defs><rect x=".8" y=".8" width="11.4" height="12.4" rx="1.5" fill="url(#bk6)" stroke="#102e70" stroke-width=".9"/><path d="M2 2 H11.4" stroke="#e4f2ff" stroke-width="1.5"/><path d="M1.5 2.6 V12.6" stroke="#0a2258" stroke-width="1.4"/></svg>
<div class="t g" style="left:766px;top:352px;">S...</div>
<div class="t g" style="left:795px;top:352px;">s..</div>
<div class="t g" style="right:392px;top:352px;">0</div>
<div class="a" style="left:932px;top:350px;width:14px;height:23px;overflow:hidden"><div class="t g" style="left:0;top:2px">P..</div></div>
<div class="a " style="left:952px;top:352px;width:16px;height:18px;background:linear-gradient(#fff 55%,#e9ecf2);border:1px solid #1e2a44"></div>
<div class="a cbg" style="left:982px;top:354px;width:14px;height:14px;"></div>
<div class="a " style="left:349px;top:373px;width:12px;height:23px;background:linear-gradient(90deg,#e9ecf2,#dde2eb);border-bottom:1px solid #cfd6e2"></div>
<div class="a " style="left:361px;top:373px;width:886px;height:23px;background:#f3f4f9;overflow:hidden"></div>
<div class="t g" style="left:365px;top:375px;">17...</div>
<div class="t g" style="left:402px;top:375px;">Guzik pros...</div>
<div class="t g" style="left:499px;top:375px;">Guzik</div>
<div class="a " style="left:349px;top:396px;width:12px;height:23px;background:linear-gradient(90deg,#e9ecf2,#dde2eb);border-bottom:1px solid #cfd6e2"></div>
<div class="a " style="left:361px;top:396px;width:886px;height:23px;background:#edf5ec;overflow:hidden"></div>
<div class="t g" style="left:365px;top:398px;">17...</div>
<div class="t g" style="left:402px;top:398px;">Guzik pros...</div>
<div class="t g" style="left:499px;top:398px;">Guzik</div>
<div class="a " style="left:349px;top:419px;width:12px;height:23px;background:linear-gradient(90deg,#e9ecf2,#dde2eb);border-bottom:1px solid #cfd6e2"></div>
<div class="a " style="left:361px;top:419px;width:886px;height:23px;background:#f3f4f9;overflow:hidden"></div>
<div class="t g" style="left:365px;top:421px;">17...</div>
<div class="t g" style="left:402px;top:421px;">Guzik pros...</div>
<div class="t g" style="left:499px;top:421px;">Guzik</div>
<div class="a " style="left:349px;top:442px;width:12px;height:23px;background:linear-gradient(90deg,#e9ecf2,#dde2eb);border-bottom:1px solid #cfd6e2"></div>
<div class="a " style="left:361px;top:442px;width:886px;height:23px;background:#edf5ec;overflow:hidden"></div>
<div class="t g" style="left:365px;top:444px;">17...</div>
<div class="t g" style="left:402px;top:444px;">Guzik pros...</div>
<div class="t g" style="left:499px;top:444px;">Guzik</div>
<div class="a " style="left:349px;top:465px;width:12px;height:23px;background:linear-gradient(90deg,#e9ecf2,#dde2eb);border-bottom:1px solid #cfd6e2"></div>
<div class="a " style="left:361px;top:465px;width:886px;height:23px;background:#f3f4f9;overflow:hidden"></div>
<div class="t g" style="left:365px;top:467px;">21...</div>
<div class="t g" style="left:402px;top:467px;">Guzik pros...</div>
<div class="t g" style="left:499px;top:467px;">Guzik</div>
<div class="a " style="left:349px;top:488px;width:12px;height:23px;background:linear-gradient(90deg,#e9ecf2,#dde2eb);border-bottom:1px solid #cfd6e2"></div>
<div class="a " style="left:361px;top:488px;width:886px;height:23px;background:#edf5ec;overflow:hidden"></div>
<div class="t g" style="left:365px;top:490px;">20...</div>
<div class="t g" style="left:402px;top:490px;">Papier</div>
<div class="t g" style="left:499px;top:490px;">Papier</div>
<div class="a " style="left:349px;top:511px;width:12px;height:23px;background:linear-gradient(90deg,#e9ecf2,#dde2eb);border-bottom:1px solid #cfd6e2"></div>
<div class="a " style="left:361px;top:511px;width:886px;height:23px;background:#f3f4f9;overflow:hidden"></div>
<div class="t g" style="left:365px;top:513px;">16...</div>
<div class="t g" style="left:402px;top:513px;">Guzik pros...</div>
<div class="t g" style="left:499px;top:513px;">Guzik</div>
<div class="a " style="left:349px;top:534px;width:12px;height:23px;background:linear-gradient(90deg,#e9ecf2,#dde2eb);border-bottom:1px solid #cfd6e2"></div>
<div class="a " style="left:361px;top:534px;width:886px;height:23px;background:#edf5ec;overflow:hidden"></div>
<div class="t g" style="left:365px;top:536px;">16...</div>
<div class="t g" style="left:402px;top:536px;">Guzik pros...</div>
<div class="t g" style="left:499px;top:536px;">Guzik</div>
<div class="a " style="left:349px;top:557px;width:12px;height:17px;background:linear-gradient(90deg,#e9ecf2,#dde2eb);border-bottom:1px solid #cfd6e2"></div>
<div class="a " style="left:361px;top:557px;width:886px;height:17px;background:#f3f4f9;overflow:hidden"></div>
<div class="a" style="left:361px;top:557px;width:300px;height:17px;overflow:hidden"><div class="t g" style="left:4px;top:2px">16...</div><div class="t g" style="left:41px;top:2px">Guzik pros...</div></div>
<div class="a " style="left:349px;top:574px;width:898px;height:39px;background:linear-gradient(#e9ecf2,#e2e6ee 52%,#d9dee8 56%,#d5dbe6);border-top:1px solid #b3bdd0"></div>
<div class="a " style="left:363px;top:577px;width:35px;height:33px;background:#fff;border:1px solid #d9dee8;border-radius:2px"></div>
<div class="a" style="left:364px;top:579px;width:27px;height:29px;overflow:hidden"><div class="t g" style="left:11px;top:5px">40</div></div>
<div class="a " style="left:402px;top:577px;width:35px;height:33px;background:#fff;border:1px solid #d9dee8;border-radius:2px"></div>
<div class="a " style="left:1247px;top:121px;width:18px;height:493px;background:#e4e7ee;border-left:1px solid #cfd5e1"></div>
<svg class="a" style="left:1251px;top:126px" width="10" height="6" viewBox="0 0 10 6"><path d="M1 5 L5 1 L9 5Z" fill="#8a93a8"/></svg>
<svg class="a" style="left:1251px;top:601px" width="10" height="6" viewBox="0 0 10 6"><path d="M1 1 L5 5 L9 1Z" fill="#8a93a8"/></svg>
<div class="a " style="left:1248px;top:470px;width:16px;height:17px;border:1px solid #98a6bf;border-radius:2px;background:linear-gradient(90deg,#f4f6f9,#d9dfe9)"></div>
<div class="a " style="left:1252px;top:474.0px;width:8px;height:1px;background:#5a6886"></div>
<div class="a " style="left:1252px;top:476.5px;width:8px;height:1px;background:#5a6886"></div>
<div class="a " style="left:1252px;top:479.0px;width:8px;height:1px;background:#5a6886"></div>
<div class="a " style="left:1252px;top:481.5px;width:8px;height:1px;background:#5a6886"></div>
<div class="a tab" style="left:206px;top:620px;width:98px;height:25px;"></div>
<div class="t " style="left:251px;top:628px;">Sztuki</div>
<svg class="a" style="left:229px;top:626px" width="17" height="14" viewBox="0 0 17 14"><rect x="1" y="1.5" width="11" height="4.5" rx="2" fill="#8cc0f4" stroke="#2a6ac0"/><rect x="5" y="8" width="11" height="4.5" rx="2" fill="#8cc0f4" stroke="#2a6ac0"/></svg>
<div class="a tab" style="left:306px;top:620px;width:200px;height:25px;"></div>
<div class="t " style="left:368px;top:628px;">Czynności</div>
<svg class="a" style="left:346px;top:627px" width="17" height="12" viewBox="0 0 17 12"><circle cx="5" cy="6.5" r="2.8" fill="#fff" stroke="#1c4fa8" stroke-width="1.4"/><circle cx="12" cy="6.5" r="2.8" fill="#fff" stroke="#1a1a2a" stroke-width="1.4"/><path d="M11 3 L14 2" stroke="#1a1a2a" stroke-width="1.2"/></svg>
<div class="a tab" style="left:1040px;top:620px;width:107px;height:25px;"></div>
<div class="a tab" style="left:1148px;top:620px;width:112px;height:25px;"></div>
<div class="t " style="left:1197px;top:628px;">Zdjęcia</div>
<svg class="a" style="left:1175px;top:625px" width="17" height="16" viewBox="0 0 17 16"><rect x="1" y="1" width="15" height="14" fill="#fff" stroke="#2a5ab8" stroke-width="1.2"/><path d="M4 4 L8.5 6.5 L13 4 V12 L8.5 9.5 L4 12Z" fill="#111"/><path d="M2 13.5 H15" stroke="#7aa8e8"/></svg>
<div class="a tab" style="left:289px;top:647px;width:110px;height:25px;"></div>
<div class="t " style="left:330px;top:654px;">Dostawcy</div>
<svg class="a" style="left:308px;top:650px" width="17" height="17" viewBox="0 0 17 17"><rect x="3" y="2" width="8" height="5" fill="#fff" stroke="#5a6a8a"/><rect x="1" y="6.5" width="13" height="6" rx="1" fill="#dfe4ee" stroke="#4a5a80"/><rect x="3.5" y="10.5" width="8" height="4.5" fill="#fff" stroke="#5a6a8a"/><circle cx="12.5" cy="4" r="3.3" fill="#8cc83a" stroke="#4a8010" stroke-width=".6"/><text x="12.5" y="6.3" font-size="6" font-weight="bold" text-anchor="middle" fill="#222" font-family="Liberation Sans, sans-serif">?</text></svg>
<div class="a tab" style="left:400px;top:647px;width:120px;height:25px;"></div>
<div class="a tab" style="left:1100px;top:647px;width:160px;height:25px;"></div>
<div class="t " style="right:49px;top:654px;">Stanie w produkcji</div>
<div class="a " style="left:202px;top:672px;width:1061px;height:5px;background:#fde7a3;border-top:1px solid #ecd898;border-radius:3px 3px 0 0"></div>
<div class="a tabA" style="left:204px;top:646px;width:85px;height:27px;"></div>
<div class="t " style="left:244px;top:654px;">Ceny</div>
<svg class="a" style="left:225px;top:653px" width="12" height="12" viewBox="0 0 14 15"><path d="M12 3.5 V1.5 H2 L7.5 7.5 L2 13.5 H12 V11.5" fill="none" stroke="#c03a10" stroke-width="2.4" stroke-linejoin="round"/><path d="M12 3.5 V1.5 H2 L7.5 7.5 L2 13.5 H12 V11.5" fill="none" stroke="#f8c020" stroke-width="1" stroke-linejoin="round"/></svg>
<div class="a " style="left:202px;top:677px;width:33px;height:30px;background:linear-gradient(#cdd5e5,#c3cde0);border-bottom:1px solid #f4f6fa"></div>
<svg class="a" style="left:211px;top:683px" width="16" height="16" viewBox="0 0 16 16"><path d="M2.5 15 Q1.5 15 1.5 14 V6 L6.5 1 H11.5 Q12.5 1 12.5 2 V14 Q12.5 15 11.5 15Z" fill="#fff" stroke="#c3c9d6" stroke-width=".8"/><path d="M1.8 6 H6.2 V1.4Z" fill="#e9ecf1" stroke="#c3c9d6" stroke-width=".5"/><path d="M12.4 2 L15 4.6 L7.6 12 L5 9.4Z" fill="#1c74e0" stroke="#1450a8" stroke-width=".5"/><path d="M12.4 2 L13.4 1.2 L15.8 3.6 L15 4.6Z" fill="#3a3a40"/><path d="M5 9.4 L7.6 12 L3.8 13.2Z" fill="#8a8e98"/><path d="M3.8 13.2 L4.3 11.6 L5.4 12.7Z" fill="#222"/></svg>
<svg class="a" style="left:208px;top:716px" width="16" height="16" viewBox="0 0 16 16"><rect x="5" y="1.5" width="9" height="9.5" fill="#e8ecf6" stroke="#6a9ad8"/><path d="M5 11 H14" stroke="#2a4a90" stroke-width="1.3"/><path d="M2.5 1 V11.5 M1 1 H4 M1 11.5 H4" stroke="#1e2a44" stroke-width="1.1"/><path d="M5 14.5 H14 M5 13 V16 M14 13 V16" stroke="#1e2a44" stroke-width="1"/></svg>
<div class="a " style="left:235px;top:677px;width:995px;height:166px;background:#fff"></div>
<div class="a " style="left:235px;top:677px;width:995px;height:24px;background:linear-gradient(#e9ecf2,#e2e6ee 48%,#d6dce8 52%,#d9dfea)"></div>
<div class="a " style="left:247px;top:678px;width:1px;height:23px;background:linear-gradient(#f4f6f9,#c9d1e0)"></div>
<div class="a " style="left:396px;top:678px;width:1px;height:23px;background:linear-gradient(#f4f6f9,#c9d1e0)"></div>
<div class="a " style="left:1122px;top:678px;width:1px;height:23px;background:linear-gradient(#f4f6f9,#c9d1e0)"></div>
<div class="a " style="left:1170px;top:678px;width:1px;height:23px;background:linear-gradient(#f4f6f9,#c9d1e0)"></div>
<svg class="a" style="left:237px;top:684px" width="10" height="10" viewBox="0 0 10 10"><path d="M5 1.5 V8.5 M1.5 5 H8.5 M2.6 2.6 L7.4 7.4 M7.4 2.6 L2.6 7.4" stroke="#222" stroke-width=".9"/></svg>
<div class="t gh" style="left:249px;top:681px;">Cennik</div>
<div class="t gh" style="left:397px;top:681px;">Dostawca</div>
<div class="t gh" style="left:1140px;top:681px;">St...</div>
<div class="t gh" style="left:1173px;top:681px;">Offset</div>
<div class="a " style="left:235px;top:701px;width:12px;height:24px;background:#e4e8f0"></div>
<div class="a " style="left:247px;top:701px;width:983px;height:23px;background:#edf5ec"></div>
<div class="a " style="left:247px;top:724px;width:983px;height:2px;background:#9aa7c2"></div>
<svg class="a" style="left:237px;top:707px" width="8" height="10" viewBox="0 0 8 10"><circle cx="4" cy="3.4" r="1.9" fill="#222"/><path d="M4 4.5 V9" stroke="#222" stroke-width="1.1"/><circle cx="3.6" cy="2.9" r=".6" fill="#fff"/></svg>
<div class="a " style="left:235px;top:727px;width:12px;height:23px;background:linear-gradient(90deg,#e9ecf2,#dde2eb);border-bottom:1px solid #cfd6e2"></div>
<div class="a " style="left:247px;top:727px;width:983px;height:23px;background:#f3f4f9"></div>
<div class="a " style="left:396px;top:727px;width:834px;height:23px;background:#fff5df"></div>
<svg class="a" style="left:238px;top:734px" width="6" height="9" viewBox="0 0 6 9"><path d="M1 1 L5 4.5 L1 8Z" fill="#1e2a44"/></svg>
<div class="t g" style="left:249px;top:729px;letter-spacing:0.4px">PODSTAWOWY</div>
<div class="t g" style="right:46px;top:729px;">0</div>
<div class="a " style="left:235px;top:750px;width:12px;height:23px;background:linear-gradient(90deg,#e9ecf2,#dde2eb);border-bottom:1px solid #cfd6e2"></div>
<div class="a " style="left:247px;top:750px;width:983px;height:23px;background:#edf5ec"></div>
<div class="t g" style="left:249px;top:752px;letter-spacing:0.4px">EURO</div>
<div class="t g" style="right:46px;top:752px;">0</div>
<div class="a " style="left:235px;top:773px;width:12px;height:23px;background:linear-gradient(90deg,#e9ecf2,#dde2eb);border-bottom:1px solid #cfd6e2"></div>
<div class="a " style="left:247px;top:773px;width:983px;height:23px;background:#f3f4f9"></div>
<div class="t g" style="left:249px;top:775px;letter-spacing:0.4px">DETAL</div>
<div class="t g" style="right:46px;top:775px;">0</div>
<div class="a " style="left:235px;top:796px;width:12px;height:23px;background:linear-gradient(90deg,#e9ecf2,#dde2eb);border-bottom:1px solid #cfd6e2"></div>
<div class="a " style="left:247px;top:796px;width:983px;height:23px;background:#edf5ec"></div>
<div class="t g" style="left:249px;top:798px;letter-spacing:0.4px">USD</div>
<div class="t g" style="right:46px;top:798px;">0</div>
<svg class="a" style="left:405px;top:735px" width="8" height="6" viewBox="0 0 8 6"><path d="M1 1 L4 4.5 L7 1" fill="none" stroke="#3a8ad8" stroke-width="1.3"/></svg>
<svg class="a" style="left:1238px;top:683px" width="17" height="16" viewBox="0 0 17 16"><g fill="#fff" stroke="#3a78d0" stroke-width="1"><circle cx="3" cy="3" r="1.6"/><circle cx="3" cy="8" r="1.6"/><circle cx="3" cy="13" r="1.6"/></g><path d="M7 3 H15 M7 8 H15 M7 13 H15" stroke="#2a3550" stroke-width="1"/></svg>
<div class="a " style="left:202px;top:843px;width:1061px;height:5px;background:#fde7a3;border-bottom:1px solid #e8d28e;border-radius:0 0 3px 3px"></div>
<div class="a " style="left:201px;top:873px;width:1064px;height:4px;background:#fde7a3;border-bottom:1px solid #e8d28e"></div>
<div class="t " style="left:201px;top:856px;width:1064px;text-align:center;letter-spacing:0.1px;color:#1e2a44;word-spacing:0.2px">U K R Y J&nbsp; &nbsp;S Z C Z E G Ó Ł Y&nbsp; &nbsp;[F8]</div>
<div class="a " style="left:726px;top:851px;width:2px;height:1px;background:#7a88a5"></div>
<div class="a " style="left:730px;top:851px;width:2px;height:1px;background:#7a88a5"></div>
<div class="a " style="left:734px;top:851px;width:2px;height:1px;background:#7a88a5"></div>
<div class="a " style="left:738px;top:851px;width:2px;height:1px;background:#7a88a5"></div>
<div class="a " style="left:412px;top:357px;width:732px;height:482px;background:#1a2238;box-shadow:0 0 3px rgba(0,0,0,.3)"></div>
<div class="a " style="left:413px;top:358px;width:730px;height:480px;background:linear-gradient(#a5b1cb 0,#b9c4da 28px,#bcc7dc 40px,#bcc7dc 100%);border:1px solid #dfe4ed"></div>
<svg class="a" style="left:422px;top:366px" width="17" height="17" viewBox="0 0 17 17"><g fill="none" stroke-width="1.6" stroke-linecap="round"><path d="M6 7 A3 3 0 1 1 9.5 3.5" stroke="#2a9a32"/><path d="M11 5 A3 3 0 1 1 14 9" stroke="#e8b418"/><path d="M11.5 11 A3 3 0 1 1 7 13" stroke="#e2401a"/><path d="M6.5 11.5 A3 3 0 0 1 2 9" stroke="#1c3fd0"/></g></svg>
<div class="t " style="left:442px;top:367px;color:#10182c;font-size:12px;letter-spacing:0.18px;line-height:15px">MODUS</div>
<div class="a " style="left:1105px;top:367px;width:31px;height:16px;border:1px solid #5a2028;border-radius:3px;background:linear-gradient(#eab0a2,#dc8a78 46%,#b8442c 52%,#c4543a 80%,#cc6a50);box-shadow:inset 0 0 0 1px rgba(255,255,255,.3)"></div>
<svg class="a" style="left:1114px;top:369px" width="13" height="12" viewBox="0 0 13 12"><path d="M2.8 2.5 L10.2 9.5 M10.2 2.5 L2.8 9.5" stroke="#6a3a34" stroke-width="4.4" stroke-linecap="square"/><path d="M2.8 2.5 L10.2 9.5 M10.2 2.5 L2.8 9.5" stroke="#f4f4f4" stroke-width="2.7" stroke-linecap="square"/></svg>
<div class="a " style="left:420px;top:387px;width:716px;height:30px;background:#eef0f5;border:1px solid #a3b0c9"></div>
<div class="t " style="left:424px;top:395px;color:#10182c;letter-spacing:0.08px">· EDYCJA ASORTYMENTU ·</div>
<div class="a " style="left:426px;top:423px;width:52px;height:46px;border:1px solid #93a1bc"></div>
<svg class="a" style="left:430px;top:426px" width="42" height="40" viewBox="430 426 42 40"><defs><linearGradient id="cL" x1="0" x2="1"><stop offset="0" stop-color="#d01010"/><stop offset=".8" stop-color="#b00000"/><stop offset="1" stop-color="#e06060"/></linearGradient><linearGradient id="cR" x1="0" x2="1"><stop offset="0" stop-color="#f0a0a0"/><stop offset=".25" stop-color="#c80808"/><stop offset="1" stop-color="#a80000"/></linearGradient><linearGradient id="cT" x1="0" y1="0" x2="0" y2="1"><stop offset="0" stop-color="#e01818"/><stop offset="1" stop-color="#f45050"/></linearGradient></defs><g stroke="#2a2222" stroke-width=".9" stroke-linejoin="round"><path d="M443.2 437.8 L456.3 430.1 L467.7 437.8 L454.7 446.2Z" fill="url(#cT)"/><path d="M443.2 437.8 L454.7 446.2 L454.7 461.7 L443.2 453.6Z" fill="url(#cL)"/><path d="M454.7 446.2 L467.7 437.8 L467.7 453.6 L454.7 461.7Z" fill="url(#cR)"/><path d="M436.2 449 L443.9 444.7 L451.6 449 L443.5 453.6Z" fill="url(#cT)"/><path d="M436.2 449 L443.5 453.6 L443.5 461.7 L436.2 458.3Z" fill="url(#cL)"/><path d="M443.5 453.6 L451.6 449 L451.6 458.3 L443.5 461.7Z" fill="url(#cR)"/></g><path d="M445.5 438 L454.7 444.4 L465.5 438" fill="none" stroke="#ffd0d0" stroke-width=".8" opacity=".85"/><path d="M438 449.3 L443.5 452.4 L449.8 449.3" fill="none" stroke="#ffd0d0" stroke-width=".7" opacity=".85"/></svg>
<div class="a " style="left:484px;top:427px;width:647px;height:18px;border:1px solid #9398a2;box-shadow:inset 0 0 0 1px #fafbfc"></div>
<div class="t " style="left:484px;top:429px;width:647px;text-align:center;color:#10182c;font-size:12px;letter-spacing:0.46px;line-height:15px">EDYCJA W TRYBIE WIELOZAZNACZENIA</div>
<div class="a " style="left:484px;top:446px;width:647px;height:18px;border:1px solid #9398a2;box-shadow:inset 0 0 0 1px #fafbfc"></div>
<div class="t " style="left:484px;top:448px;width:647px;text-align:center;color:#10182c;font-size:12px;letter-spacing:0.22px;line-height:15px">ILOŚĆ ZAZNACZONYCH REKORDÓW: 5</div>
<div class="a cb" style="left:427px;top:482px;width:14px;height:14px;"></div>
<div class="t zm" style="left:444px;top:484px;color:#10182c">Zmień</div>
<div class="t gr" style="right:729px;top:484px;">Pełna nazwa</div>
<div class="a inp" style="left:548px;top:481px;width:518px;height:19px;"></div>
<div class="a cb" style="left:427px;top:503px;width:14px;height:14px;"></div>
<div class="t zm" style="left:444px;top:505px;color:#10182c">Zmień</div>
<div class="t gr" style="right:729px;top:505px;">Nazwa fiskalna</div>
<div class="a inp" style="left:548px;top:502px;width:278px;height:19px;"></div>
<div class="a tab" style="left:495px;top:524px;width:92px;height:24px;"></div>
<div class="t " style="left:495px;top:530px;width:92px;text-align:center;">Dane handlowe</div>
<div class="a tab" style="left:587px;top:524px;width:46px;height:24px;"></div>
<div class="t " style="left:587px;top:530px;width:46px;text-align:center;">Partie</div>
<div class="a tab" style="left:633px;top:524px;width:38px;height:24px;"></div>
<div class="t " style="left:633px;top:530px;width:38px;text-align:center;">Inne</div>
<div class="a " style="left:425px;top:548px;width:706px;height:4px;background:#fde7a3;border-top:1px solid #ecd898;border-radius:0 3px 0 0"></div>
<div class="a tabA" style="left:428px;top:523px;width:67px;height:26px;"></div>
<div class="t " style="left:428px;top:530px;width:67px;text-align:center;">Szczegóły</div>
<div class="a " style="left:425px;top:552px;width:1px;height:234px;background:#a3b0ca"></div>
<div class="a " style="left:1130px;top:552px;width:1px;height:234px;background:#a3b0ca"></div>
<div class="a " style="left:425px;top:782px;width:706px;height:5px;background:#fde7a3;border-bottom:1px solid #e8d28e;border-radius:0 0 3px 3px"></div>
<div class="a cb" style="left:440px;top:566px;width:14px;height:14px;"></div>
<div class="t gr" style="right:674px;top:567px;">Kod kreskowy</div>
<div class="t zm" style="left:457px;top:567px;color:#10182c">Zmień</div>
<div class="a cb" style="left:440px;top:587px;width:14px;height:14px;"></div>
<div class="t gr" style="right:674px;top:588px;">Nr katalogowy</div>
<div class="t zm" style="left:457px;top:588px;color:#10182c">Zmień</div>
<div class="a cb" style="left:440px;top:608px;width:14px;height:14px;"></div>
<div class="t gr" style="right:674px;top:609px;">Nr handlowy</div>
<div class="t zm" style="left:457px;top:609px;color:#10182c">Zmień</div>
<div class="a cb" style="left:440px;top:629px;width:14px;height:14px;"></div>
<div class="t gr" style="right:674px;top:630px;">PKWiU</div>
<div class="t zm" style="left:457px;top:630px;color:#10182c">Zmień</div>
<div class="a cbw" style="left:440px;top:650px;width:14px;height:14px;"></div>
<svg class="a" style="left:441px;top:650px" width="13" height="13" viewBox="0 0 13 13"><path d="M2 6.5 L5 10.5 L11 1.5" fill="none" stroke="#111" stroke-width="1.8"/></svg>
<div class="t " style="right:674px;top:651px;color:#10182c">Magazyn składowania</div>
<div class="t zm" style="left:457px;top:651px;color:#10182c">Zmień</div>
<div class="a cb" style="left:440px;top:671px;width:14px;height:14px;"></div>
<div class="t gr" style="right:670px;top:672px;letter-spacing:-0.08px">Asortyment nieaktywny</div>
<div class="t zm" style="left:457px;top:672px;color:#10182c">Zmień</div>
<div class="a cb" style="left:440px;top:690px;width:14px;height:14px;"></div>
<div class="t gr" style="left:486px;top:691px;">Lokalizacja</div>
<div class="t zm" style="left:457px;top:691px;color:#10182c">Zmień</div>
<div class="a inp" style="left:603px;top:564px;width:148px;height:19px;"></div>
<div class="a inp" style="left:603px;top:585px;width:148px;height:19px;"></div>
<div class="a inp" style="left:603px;top:606px;width:148px;height:19px;"></div>
<div class="a inp" style="left:603px;top:627px;width:148px;height:19px;"></div>
<div class="a " style="left:603px;top:648px;width:148px;height:19px;background:#fff;border:1px solid #98a6bf"></div>
<div class="t " style="left:605px;top:652px;color:#10182c">GŁÓWNY</div>
<svg class="a" style="left:738px;top:655px" width="8" height="5" viewBox="0 0 8 5"><path d="M0.5 0.5 H7.5 L4 4.5Z" fill="#1e2a44"/></svg>
<div class="a cb" style="left:608px;top:671px;width:14px;height:14px;"></div>
<svg class="a" style="left:609px;top:672px" width="12" height="12" viewBox="0 0 12 12"><path d="M2 6 L4.6 9.6 L10 1.5" fill="none" stroke="#98a3b8" stroke-width="1.5"/></svg>
<div class="t " style="left:625px;top:672px;color:#10182c">Nieaktywny</div>
<div class="a inp" style="left:603px;top:688px;width:148px;height:19px;"></div>
<svg class="a" style="left:711px;top:689px" width="17" height="16" viewBox="0 0 17 16"><rect x="2" y="2" width="13" height="13" fill="#e4e7ee" stroke="#a8b0c0"/><circle cx="7" cy="7" r="4.2" fill="#eef1f6" stroke="#9aa3b5" stroke-width="1.3"/><path d="M10 10 L15 15" stroke="#9aa3b5" stroke-width="2"/></svg>
<div class="a " style="left:733px;top:690px;width:15px;height:15px;border:1px solid #c3cbda;border-radius:50%;background:#e4e8ef"></div>
<svg class="a" style="left:736px;top:693px" width="9" height="9" viewBox="0 0 9 9"><path d="M1.5 1.5 L7.5 7.5 M7.5 1.5 L1.5 7.5" stroke="#555" stroke-width="1.6"/></svg>
<div class="a cbw" style="left:755px;top:566px;width:14px;height:14px;"></div>
<svg class="a" style="left:756px;top:566px" width="13" height="13" viewBox="0 0 13 13"><path d="M2 6.5 L5 10.5 L11 1.5" fill="none" stroke="#111" stroke-width="1.8"/></svg>
<div class="t zm" style="left:772px;top:567px;color:#10182c">Zmień</div>
<div class="t " style="right:391px;top:567px;color:#10182c">Kod CN</div>
<div class="a " style="left:885px;top:563px;width:120px;height:21px;background:#fff;border:2px solid #9ba7be"></div>
<div class="a " style="left:888px;top:566px;width:97px;height:15px;background:#0a78d8;outline:1px dotted #4a3410;outline-offset:-1px"></div>
<div class="t " style="left:889px;top:567px;color:#fff">94032080</div>
<svg class="a" style="left:990px;top:572px" width="8" height="5" viewBox="0 0 8 5"><path d="M0.5 0.5 H7.5 L4 4.5Z" fill="#1e2a44"/></svg>
<div class="a cb" style="left:755px;top:587px;width:14px;height:14px;"></div>
<div class="t zm" style="left:772px;top:588px;color:#10182c">Zmień</div>
<div class="t gr" style="right:391px;top:588px;">Kraj pochodzenia</div>
<div class="a inp" style="left:886px;top:585px;width:43px;height:19px;"></div>
<div class="t " style="left:888px;top:588px;color:#10182c">PL</div>
<div class="a " style="left:420px;top:792px;width:716px;height:40px;background:#eef0f5"></div>
<div class="a " style="left:920px;top:795px;width:100px;height:34px;border:1px solid #cfc49c;border-radius:2px;background:linear-gradient(#eef0f5,#dfe3ec 50%,#ccd3e1);box-shadow:inset 0 0 0 1px #fbf3d8"></div>
<svg class="a" style="left:937px;top:805px" width="14" height="14" viewBox="0 0 14 14"><circle cx="7" cy="7" r="6.5" fill="#3aa83a"/><path d="M3.8 7.2 L6.2 9.6 L10.4 4.8" fill="none" stroke="#fff" stroke-width="1.6"/></svg>
<div class="t " style="left:956px;top:806px;color:#10182c">Zatwierdź</div>
<svg class="a" style="left:1058px;top:805px" width="14" height="14" viewBox="0 0 14 14"><circle cx="7" cy="7" r="6.5" fill="#e8332a"/><path d="M4.4 4.4 L9.6 9.6 M9.6 4.4 L4.4 9.6" stroke="#fff" stroke-width="1.7"/></svg>
<div class="t " style="left:1078px;top:806px;color:#10182c">Anuluj</div>
<svg class="a" style="left:0;top:0;pointer-events:none" width="1274" height="903" viewBox="0 0 1274 903"><defs><filter id="ds" x="-5%" y="-5%" width="110%" height="120%"><feDropShadow dx="0" dy="1.5" stdDeviation="1.1" flood-color="#000" flood-opacity=".28"/></filter></defs><g filter="url(#ds)"><g fill="#f0141c" stroke="#f0141c" stroke-width=".6" stroke-linejoin="round"><path d="M290.7 137.1 L282.5 131.0 L285.9 126.9 L270.5 122.0 L278.3 136.2 L281.7 132.1 L289.3 138.9Z"/><path d="M325.6 312.4 L337.1 304.0 L339.8 307.9 L347.0 296.3 L333.6 298.9 L336.3 302.8 L324.4 310.6Z"/><path d="M767.9 531.5 L691.9 536.4 L691.6 531.6 L677.0 538.0 L692.3 542.6 L692.0 537.8 L768.1 533.7Z"/><path d="M833.0 629.5 L813.0 595.2 L817.2 592.8 L805.0 582.5 L807.6 598.3 L811.8 595.9 L831.0 630.5Z"/><path d="M822.8 645.4 L768.7 654.1 L768.0 649.3 L754.0 657.0 L769.7 660.2 L768.9 655.4 L823.2 647.6Z"/></g><rect x="15.75" y="194.75" width="122.5" height="24.5" rx="5.75" fill="none" stroke="#fc0c10" stroke-width="2.5"/><rect x="239.20000000000002" y="83.0" width="38.2" height="36.900000000000006" rx="5.6" fill="none" stroke="#fc0c10" stroke-width="2.8"/><rect x="347.65" y="240.45" width="895.7" height="113.9" rx="5.75" fill="none" stroke="#fc0c10" stroke-width="2.5"/><rect x="425.85" y="526.05" width="248.5" height="18.7" rx="4.75" fill="none" stroke="#fc0c10" stroke-width="2.5"/><rect x="434.95" y="648.85" width="55.5" height="15.5" rx="4.75" fill="none" stroke="#fc0c10" stroke-width="2.5"/><rect x="752.25" y="564.95" width="70.1" height="15.899999999999999" rx="4.75" fill="none" stroke="#fc0c10" stroke-width="2.5"/></g></svg>
<div class="a num" style="left:130.5px;top:190.8px;width:30px;height:30px;font-size:14.5px;line-height:27px">1</div>
<div class="a num" style="left:298.5px;top:303.5px;width:30px;height:30px;font-size:14.5px;line-height:27px">2</div>
<div class="a num" style="left:282.4px;top:129.6px;width:30px;height:30px;font-size:14.5px;line-height:27px">3</div>
<div class="a num" style="left:766.4px;top:516.3px;width:30px;height:30px;font-size:14.5px;line-height:27px">4</div>
<div class="a num" style="left:822.3px;top:629.6px;width:30px;height:30px;font-size:14.5px;line-height:27px">5</div>
<div class="a " style="left:1001px;top:255px;width:238px;height:78px;background:#fff;border:1px solid #7a7a7a;border-radius:17px;box-shadow:0 1px 5px rgba(0,0,0,.45)"></div>
<div class="t " style="left:1001px;top:264px;width:238px;text-align:center;font-family:&quot;Liberation Sans&quot;,sans-serif;font-size:18px;letter-spacing:0.28px;line-height:20px;color:#3a3a3a">Zaznaczając pozycje</div>
<div class="t " style="left:1001px;top:286px;width:238px;text-align:center;font-family:&quot;Liberation Sans&quot;,sans-serif;font-size:18px;letter-spacing:0.28px;line-height:20px;color:#3a3a3a">przytrzymaj</div>
<div class="t " style="left:1001px;top:307px;width:238px;text-align:center;font-family:&quot;Liberation Sans&quot;,sans-serif;font-size:18px;letter-spacing:0.28px;line-height:20px;color:#3a3a3a">Ctrl lub Shift</div>
</body>
</html>
